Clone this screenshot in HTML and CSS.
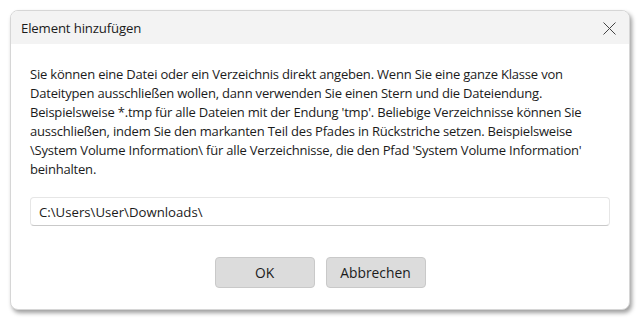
FILE: index.html
```html
<!DOCTYPE html>
<html lang="de">
<head>
<meta charset="utf-8">
<title>Element hinzufügen</title>
<link rel="stylesheet" href="styles.css">
</head>
<body>
<div class="dialog">
  <div class="titlebar">
    <span class="title">Element hinzufügen</span>
    <span class="close" aria-label="Schließen">
      <svg width="13" height="13" viewBox="0 0 13 13"><path d="M0.5 0.5 L12.5 12.5 M12.5 0.5 L0.5 12.5" stroke="#444444" stroke-width="1" fill="none"/></svg>
    </span>
  </div>
  <div class="content">
    <p class="desc">Sie können eine Datei oder ein Verzeichnis direkt angeben. Wenn Sie eine ganze Klasse von<br>Dateitypen ausschließen wollen, dann verwenden Sie einen Stern und die Dateiendung.<br>Beispielsweise *.tmp für alle Dateien mit der Endung 'tmp'. Beliebige Verzeichnisse können Sie<br>ausschließen, indem Sie den markanten Teil des Pfades in Rückstriche setzen. Beispielsweise<br>\System Volume Information\ für alle Verzeichnisse, die den Pfad 'System Volume Information'<br>beinhalten.</p>
    <div class="field">C:\Users\User\Downloads\</div>
    <div class="buttons">
      <button class="btn">OK</button>
      <button class="btn">Abbrechen</button>
    </div>
  </div>
</div>
</body>
</html>
```
FILE: styles.css
```css
html, body {
  margin: 0;
  padding: 0;
  background: #ffffff;
}
body {
  padding: 10px;
  font-family: "Segoe UI", "Open Sans", "Noto Sans", sans-serif;
  color: #1b1b1b;
}
.dialog {
  width: 620px;
  height: 300px;
  box-sizing: border-box;
  background: #ffffff;
  border: 1px solid #d6d6d6;
  border-radius: 8px;
  box-shadow: 2px 3px 4px rgba(0,0,0,0.38);
  overflow: hidden;
  display: flex;
  flex-direction: column;
}
.titlebar {
  height: 32px;
  flex: none;
  background: #f3f3f3;
  display: flex;
  align-items: center;
  justify-content: space-between;
  padding: 1px 13px 0 10px;
}
.title {
  font-size: 13.2px;
  letter-spacing: -0.15px;
  color: #1b1b1b;
}
.close {
  display: flex;
  width: 13px;
  height: 13px;
}
.content {
  padding: 21px 19px 0 19px;
  display: flex;
  flex-direction: column;
}
.desc {
  margin: 0;
  font-size: 13px;
  line-height: 19px;
  letter-spacing: -0.2px;
  white-space: nowrap;
}
.field {
  margin-top: 18px;
  height: 29px;
  box-sizing: border-box;
  border: 1px solid #e6e6e6;
  border-bottom: 1px solid #c9c9c9;
  border-radius: 4px;
  padding: 0 8px;
  display: flex;
  align-items: center;
  font-size: 13.2px;
  letter-spacing: 0;
}
.buttons {
  margin-top: 31px;
  display: flex;
  justify-content: center;
  gap: 11px;
}
.btn {
  width: 100px;
  height: 31px;
  box-sizing: border-box;
  background: #dcdcdc;
  border: 1px solid #c9c9c9;
  border-radius: 4px;
  font-family: inherit;
  font-size: 13.8px;
  color: #1b1b1b;
  padding: 0;
}
```
